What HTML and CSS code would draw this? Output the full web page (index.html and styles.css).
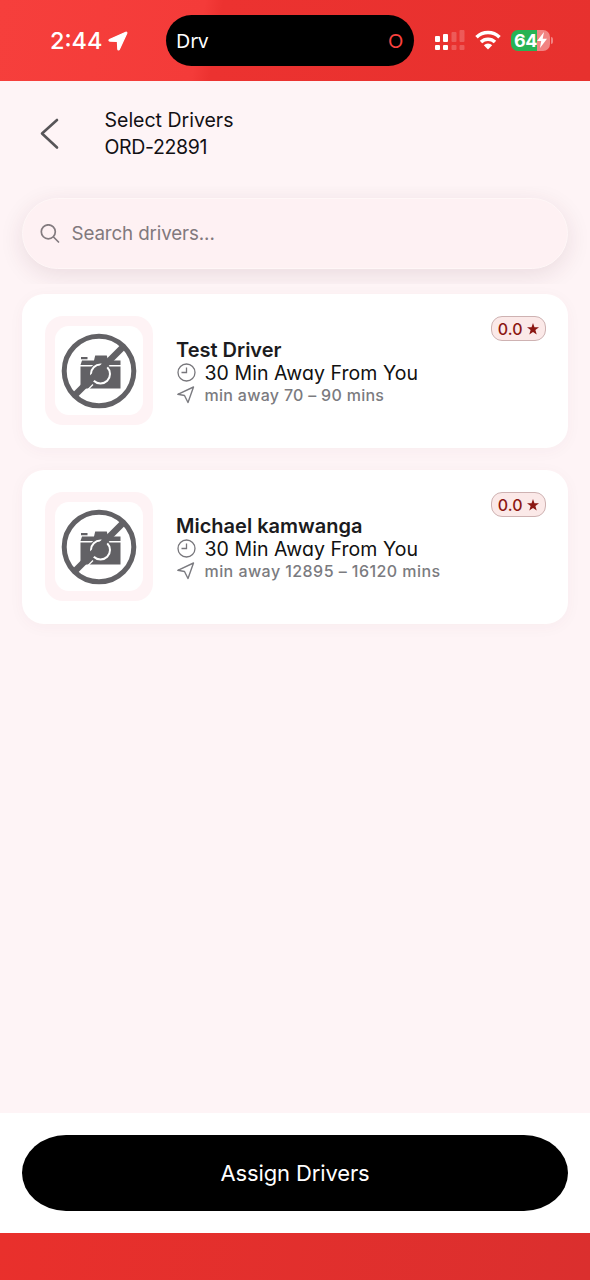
FILE: index.html
```html
<!DOCTYPE html>
<html lang="en">
<head>
<meta charset="utf-8">
<title>Select Drivers</title>
<link rel="stylesheet" href="styles.css">
</head>
<body>
<svg width="0" height="0" class="defs" aria-hidden="true">
  <symbol id="no-photo" viewBox="0 0 76 76">
    <path d="M20 24h6.500v2.200H20zM21 27.500h12l1.200-5h11.600l1.200 5H59.500v4.500H19.500zM19.500 33.500h40V55.500h-40z" fill="#626165"/>
    <circle cx="39.500" cy="41" r="11.500" fill="#626165"/>
    <circle cx="39.500" cy="41" r="9.500" fill="none" stroke="#fff" stroke-width="2"/>
    <path d="M13 63L63 13" stroke="#626165" stroke-width="6.500"/>
    <path d="M17 66.500L32 51.500" stroke="#fff" stroke-width="1.200"/>
    <circle cx="38" cy="38" r="34.800" fill="none" stroke="#626165" stroke-width="5"/>
  </symbol>
  <symbol id="clock" viewBox="0 0 20 20">
    <g fill="none" stroke="currentColor" stroke-width="1.300"><circle cx="10.500" cy="9.500" r="8.500"/><path d="M10.500 4.500V9.500H5.500"/></g>
  </symbol>
  <symbol id="nav" viewBox="0 0 20 20">
    <path d="M17.500 2L12 17.500L8.500 10.500L1.800 9.300Z" fill="none" stroke="currentColor" stroke-width="1.400" stroke-linejoin="round"/>
  </symbol>
  <symbol id="star" viewBox="0 0 12 12">
    <path d="M6 0l1.450 4.150L12 4.350 8.400 7.050 9.700 11.500 6 8.900 2.300 11.500 3.600 7.050 0 4.350l4.550-.2z" fill="currentColor"/>
  </symbol>
</svg>
<div class="app">
  <div class="status">
    <div class="time"><span>2:44</span>
      <svg width="20" height="20" viewBox="0 0 20 20"><path d="M17.800 1.300L1.500 8.600c-.9.400-.7 1.400.3 1.500l7.600.4.400 7.600c.1 1 1.200 1.100 1.600.2L18.800 2.200c.3-.7-.3-1.200-1-.9z" fill="#fff" stroke="#fff" stroke-width="1.200"/></svg>
    </div>
    <div class="island"><span>Drv</span><span class="island-o">O</span></div>
    <div class="indicators">
      <svg width="31" height="22" viewBox="0 0 31 22" fill="#fff"><rect x="0" y="7" width="5" height="6" rx="1"/><rect x="8" y="5" width="5" height="8" rx="1"/><rect x="0" y="16" width="5" height="5" rx="1"/><rect x="8" y="16" width="5" height="5" rx="1"/><g opacity=".2"><rect x="16.500" y="3" width="5" height="10" rx="1"/><rect x="24.500" y="1" width="5" height="12" rx="1"/><rect x="16.500" y="16" width="5" height="5" rx="1"/><rect x="24.500" y="16" width="5" height="5" rx="1"/></g></svg>
      <svg class="wifi" width="26" height="20" viewBox="0 0 26 20"><g fill="none" stroke="#fff" stroke-width="3.500"><path d="M1.500 7.200a16.500 16.500 0 0 1 23 0"/><path d="M6 12a10 10 0 0 1 14 0"/></g><path d="M8.800 15.300a6 6 0 0 1 8.400 0L13 19.600z" fill="#fff"/></svg>
      <div class="battery"><span>64</span><svg width="10" height="16" viewBox="0 0 10 16"><path d="M7 0L0 9h4.200L3 16l7-9.300H5.700z" fill="#fff"/></svg></div><i class="battery-tip"></i>
    </div>
  </div>
  <header class="header">
    <svg width="22" height="32" viewBox="0 0 22 32"><path d="M18 2L3 15.500l15 14" fill="none" stroke="#575558" stroke-width="2.600" stroke-linecap="round" stroke-linejoin="round"/></svg>
    <div class="title"><div class="title-main">Select Drivers</div><div class="title-order">ORD-22891</div></div>
  </header>
  <div class="search-wrap">
    <div class="search">
      <svg width="20" height="20" viewBox="0 0 20 20"><g fill="none" stroke="#837b7f" stroke-width="1.700" stroke-linecap="round"><circle cx="8.300" cy="7.800" r="7"/><path d="M13.500 13l5 5"/></g></svg>
      <span>Search drivers...</span>
    </div>
  </div>
  <main class="list">
    <article class="card">
      <div class="avatar"><div class="photo"><svg width="76" height="76"><use href="#no-photo"/></svg></div></div>
      <div class="info">
        <div class="name">Test Driver</div>
        <div class="eta"><svg width="20" height="20"><use href="#clock"/></svg><span>30 Min Away From You</span></div>
        <div class="range"><svg width="20" height="20"><use href="#nav"/></svg><span>min away 70 – 90 mins</span></div>
      </div>
      <div class="rating"><span>0.0</span><svg width="12" height="12"><use href="#star"/></svg></div>
    </article>
    <article class="card">
      <div class="avatar"><div class="photo"><svg width="76" height="76"><use href="#no-photo"/></svg></div></div>
      <div class="info">
        <div class="name">Michael kamwanga</div>
        <div class="eta"><svg width="20" height="20"><use href="#clock"/></svg><span>30 Min Away From You</span></div>
        <div class="range range-long"><svg width="20" height="20"><use href="#nav"/></svg><span>min away 12895 – 16120 mins</span></div>
      </div>
      <div class="rating"><span>0.0</span><svg width="12" height="12"><use href="#star"/></svg></div>
    </article>
  </main>
  <footer class="footer"><button class="assign">Assign Drivers</button></footer>
  <div class="bottom"></div>
</div>
</body>
</html>
```
FILE: styles.css
```css
* { box-sizing: border-box; }
body { margin: 0; font-family: Inter, "Liberation Sans", sans-serif; }
svg { display: block; flex: none; }
.defs { position: absolute; }
.app { width: 590px; height: 1280px; display: flex; flex-direction: column; background: #fef4f6; overflow: hidden; }
.status { height: 81px; flex: none; display: flex; align-items: flex-start; background: linear-gradient(100deg, #f63f3c 0%, #f43b39 34%, #ec3230 37%, #e7312e 100%); color: #fff; }
.time { width: 166px; padding: 26px 0 0 50px; display: flex; align-items: center; gap: 6px; font-size: 23.5px; line-height: 30px; font-weight: 500; }
.island { width: 248px; height: 51px; margin-top: 15.4px; padding: 0 11px 0 10px; border-radius: 26px; background: #000; display: flex; justify-content: space-between; align-items: center; font-family: "Noto Sans", sans-serif; font-size: 19.5px; }
.island-o { color: #f9423f; font-family: Lato, sans-serif; font-size: 18.5px; }
.indicators { display: flex; align-items: center; margin: 29px 0 0 21px; }
.wifi { margin-left: 9px; }
.battery { width: 39px; height: 21px; margin-left: 10px; padding-left: 3px; border-radius: 7px; background: linear-gradient(90deg, #27b354 0 66%, #f18482 66%); display: flex; align-items: center; font-size: 18px; font-weight: 700; letter-spacing: -.4px; }
.battery-tip { width: 2px; height: 7px; margin-left: 1px; border-radius: 0 2px 2px 0; background: #f18482; }
.header { height: 105px; flex: none; display: flex; align-items: center; padding-left: 39px; gap: 43.5px; }
.title { font-size: 19.5px; line-height: 27px; color: #121014; font-feature-settings: "cv11"; }
.title-order { letter-spacing: -.35px; }
.search-wrap { height: 98px; flex: none; padding: 12px 22px; overflow: hidden; }
.search { height: 71px; padding-left: 17px; border: 1px solid #fff7f7; border-radius: 36px; background: #fef1f3; box-shadow: 0 6px 24px rgba(70, 30, 45, .11); display: flex; align-items: center; gap: 11.5px; font-size: 18.8px; letter-spacing: -.13px; color: #81797d; }
.list { flex: 1; padding: 10px 22px; display: flex; flex-direction: column; gap: 22px; }
.card { height: 154px; padding: 22px 22px 22px 23px; border-radius: 22px; background: #fff; box-shadow: 0 3px 16px rgba(100, 50, 70, .04); display: flex; align-items: flex-start; }
.avatar { width: 108px; height: 109px; padding: 10px; border-radius: 18px; background: #fef3f5; }
.photo { width: 88px; height: 89px; border-radius: 14px; background: #fff; display: flex; align-items: center; justify-content: center; }
.info { flex: 1; padding: 22px 0 0 23px; }
.name { padding-top: 1px; height: 23px; font-size: 20px; line-height: 23px; font-weight: 600; color: #1b1b20; white-space: nowrap; }
.eta, .range { display: flex; align-items: center; gap: 8.5px; white-space: nowrap; color: #77767b; }
.eta { height: 23px; font-size: 19.5px; }
.eta span { color: #111; font-feature-settings: "cv11"; letter-spacing: .06px; }
.range { height: 22px; font-size: 16px; font-weight: 500; letter-spacing: .29px; color: #7b7b80; }
.range-long { letter-spacing: .44px; }
.rating { width: 55px; height: 25px; flex: none; border: 1px solid #ceb2b2; border-radius: 11px; background: #fbe9e8; color: #8b1712; display: flex; align-items: center; justify-content: center; gap: 4.5px; font-size: 16px; font-weight: 500; letter-spacing: .2px; }
.footer { height: 120px; flex: none; padding: 22px; background: #fff; }
.assign { width: 546px; height: 76px; border: 0; border-radius: 44px / 38px; background: #000; color: #fff; font-family: inherit; font-size: 22px; letter-spacing: -.12px; }
.bottom { height: 47px; flex: none; background: linear-gradient(100deg, #e9302c, #db2f2e); }
```
